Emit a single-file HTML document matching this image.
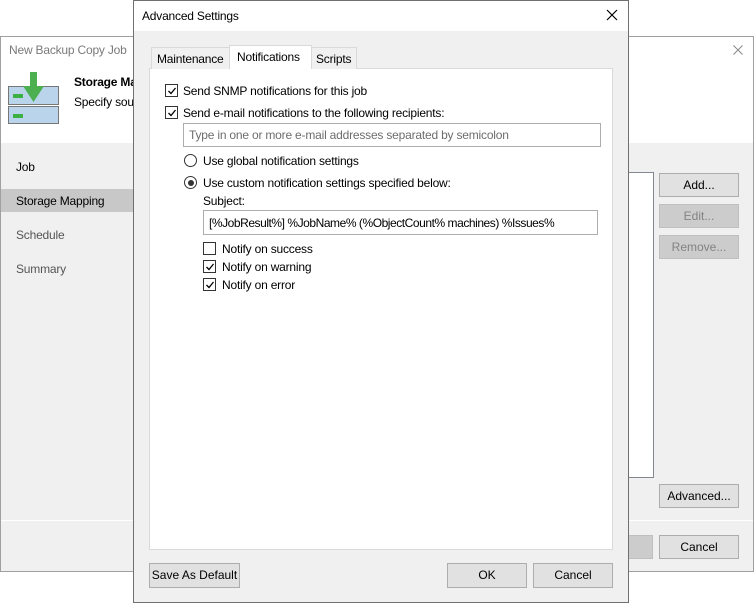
<!DOCTYPE html>
<html><head><meta charset="utf-8"><style>
*{box-sizing:border-box;margin:0;padding:0}
body{width:754px;height:603px;background:#fff;position:relative;overflow:hidden;font-family:"Liberation Sans",sans-serif;font-size:12px;color:#000}
.a{position:absolute}
.btn{position:absolute;background:#e1e1e1;border:1px solid #adadad;text-align:center;line-height:22px;font-size:12px}
.dis{background:#cccccc;border-color:#bfbfbf;color:#838383}
.cb{position:absolute;width:13px;height:13px;border:1px solid #333;background:#fff}
.cb svg{position:absolute;left:1px;top:1px}
.rd{position:absolute;width:13px;height:13px;border:1px solid #333;border-radius:50%;background:#fff}
.t{position:absolute;white-space:nowrap;letter-spacing:-0.2px}
</style></head><body>
<div class="a" style="left:0;top:36px;width:754px;height:536px;border:1px solid #a0a0a0;background:#f0f0f0"></div>
<div class="a" style="left:1px;top:37px;width:752px;height:106px;background:#fff"></div>
<div class="t" style="left:9px;top:43px;color:#7a7a7a">New Backup Copy Job</div>
<svg class="a" style="left:733px;top:45px" width="10" height="10"><path d="M0.5 0.5L9.5 9.5M9.5 0.5L0.5 9.5" stroke="#888" stroke-width="1"/></svg>
<div class="a" style="left:8px;top:86px;width:51px;height:19px;border:1px solid #777;background:#bad4ec"></div>
<div class="a" style="left:13px;top:94px;width:10px;height:4px;background:#3cb043"></div>
<div class="a" style="left:8px;top:106px;width:51px;height:18px;border:1px solid #777;background:#bad4ec"></div>
<div class="a" style="left:13px;top:114px;width:10px;height:4px;background:#3cb043"></div>
<svg class="a" style="left:18px;top:72px" width="32" height="32"><path d="M12 0h7v14h7L15.5 30 5 14h7z" fill="#4caf50"/></svg>
<div class="t" style="left:74px;top:75px;font-weight:bold">Storage Ma</div>
<div class="t" style="left:74px;top:95px">Specify sou</div>
<div class="t" style="left:16px;top:160px">Job</div>
<div class="a" style="left:1px;top:189px;width:132px;height:23px;background:#c8c8c8"></div>
<div class="t" style="left:16px;top:194px">Storage Mapping</div>
<div class="t" style="left:16px;top:228px;color:#555">Schedule</div>
<div class="t" style="left:16px;top:262px;color:#555">Summary</div>
<div class="a" style="left:600px;top:172px;width:54px;height:306px;border:1px solid #828790;background:#fff"></div>
<div class="btn" style="left:659px;top:173px;width:80px;height:24px">Add...</div>
<div class="btn dis" style="left:659px;top:204px;width:80px;height:24px">Edit...</div>
<div class="btn dis" style="left:659px;top:235px;width:80px;height:24px">Remove...</div>
<div class="btn" style="left:659px;top:484px;width:80px;height:24px">Advanced...</div>
<div class="a" style="left:1px;top:520px;width:752px;height:1px;background:#fff"></div>
<div class="btn dis" style="left:600px;top:535px;width:53px;height:24px"></div>
<div class="btn" style="left:659px;top:535px;width:80px;height:24px">Cancel</div>
<div class="a" style="left:133px;top:0;width:496px;height:603px;border:1px solid #707070;background:#f0f0f0"></div>
<div class="a" style="left:134px;top:1px;width:494px;height:30px;background:#fff"></div>
<div class="t" style="left:142px;top:9px">Advanced Settings</div>
<svg class="a" style="left:606px;top:9px" width="12" height="12"><path d="M1 1L11 11M11 1L1 11" stroke="#000" stroke-width="1.2"/></svg>
<div class="a" style="left:149px;top:68px;width:464px;height:482px;border:1px solid #d9d9d9;background:#fff"></div>
<div class="a" style="left:151px;top:47px;width:79px;height:22px;border:1px solid #d9d9d9;border-bottom:none;background:#f0f0f0"></div>
<div class="t" style="left:157px;top:52px">Maintenance</div>
<div class="a" style="left:229px;top:45px;width:83px;height:24px;border:1px solid #d9d9d9;border-bottom:none;background:#fff"></div>
<div class="t" style="left:237px;top:50px">Notifications</div>
<div class="a" style="left:311px;top:47px;width:46px;height:22px;border:1px solid #d9d9d9;border-bottom:none;background:#f0f0f0"></div>
<div class="t" style="left:316px;top:52px">Scripts</div>
<div class="cb" style="left:165px;top:84px"><svg width="10" height="10"><path d="M1.5 5l2.5 2.5L8.5 2" stroke="#000" stroke-width="1.3" fill="none"/></svg></div>
<div class="t" style="left:183px;top:84px">Send SNMP notifications for this job</div>
<div class="cb" style="left:165px;top:106px"><svg width="10" height="10"><path d="M1.5 5l2.5 2.5L8.5 2" stroke="#000" stroke-width="1.3" fill="none"/></svg></div>
<div class="t" style="left:183px;top:106px">Send e-mail notifications to the following recipients:</div>
<div class="a" style="left:183px;top:123px;width:418px;height:24px;border:1px solid #adadad;background:#fff"></div>
<div class="t" style="left:189px;top:128px;color:#6d6d6d">Type in one or more e-mail addresses separated by semicolon</div>
<div class="rd" style="left:184px;top:154px"></div>
<div class="t" style="left:203px;top:154px">Use global notification settings</div>
<div class="rd" style="left:184px;top:176px"><div class="a" style="left:2.5px;top:2.5px;width:6px;height:6px;border-radius:50%;background:#333"></div></div>
<div class="t" style="left:203px;top:176px">Use custom notification settings specified below:</div>
<div class="t" style="left:203px;top:194px">Subject:</div>
<div class="a" style="left:203px;top:210px;width:395px;height:25px;border:1px solid #adadad;background:#fff"></div>
<div class="t" style="left:209px;top:216px;letter-spacing:-0.45px">[%JobResult%] %JobName% (%ObjectCount% machines) %Issues%</div>
<div class="cb" style="left:203px;top:242px"></div>
<div class="t" style="left:222px;top:242px">Notify on success</div>
<div class="cb" style="left:203px;top:260px"><svg width="10" height="10"><path d="M1.5 5l2.5 2.5L8.5 2" stroke="#000" stroke-width="1.3" fill="none"/></svg></div>
<div class="t" style="left:222px;top:260px">Notify on warning</div>
<div class="cb" style="left:203px;top:278px"><svg width="10" height="10"><path d="M1.5 5l2.5 2.5L8.5 2" stroke="#000" stroke-width="1.3" fill="none"/></svg></div>
<div class="t" style="left:222px;top:278px">Notify on error</div>
<div class="btn" style="left:149px;top:563px;width:91px;height:25px">Save As Default</div>
<div class="btn" style="left:447px;top:563px;width:80px;height:25px">OK</div>
<div class="btn" style="left:533px;top:563px;width:80px;height:25px">Cancel</div>
</body></html>
